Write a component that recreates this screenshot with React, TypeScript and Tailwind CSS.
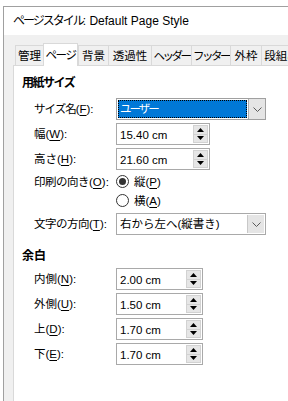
import React from "react";

const font = "font-['Liberation_Sans','Noto_Sans_CJK_JP',sans-serif]";

function Key({ label, k, tight }: { label: string; k: string; tight?: string }) {
  return (
    <span className="whitespace-nowrap">
      <span className={tight}>{label}</span>(<span className="underline underline-offset-2">{k}</span>):
    </span>
  );
}

function Tab({ w, children, tight }: { w: string; children: React.ReactNode; tight?: string }) {
  return (
    <div className={`${w} h-[20px] shrink-0 border-l border-t border-[#d9d9d9] bg-[#f0f0f0] flex items-center justify-center whitespace-nowrap`}>
      <span className={tight}>{children}</span>
    </div>
  );
}

function Arrow({ up }: { up?: boolean }) {
  return (
    <svg width="7" height="4" viewBox="0 0 7 4">
      <polygon points={up ? "0,4 3.5,0 7,4" : "0,0 7,0 3.5,4"} fill="#000" />
    </svg>
  );
}

function Spin({ value, w }: { value: string; w: string }) {
  return (
    <div className={`${w} h-[22px] flex border border-[#a9a9a9] bg-white`}>
      <div className="flex-1 flex items-center pl-[3px] pt-px">{value}</div>
      <div className="w-[16px] flex flex-col py-px pr-px">
        <div className="flex-1 flex items-center justify-center bg-[#e6e6e6] border border-[#d2d2d2]">
          <Arrow up />
        </div>
        <div className="flex-1 flex items-center justify-center bg-[#e6e6e6] border border-t-0 border-[#d2d2d2]">
          <Arrow />
        </div>
      </div>
    </div>
  );
}

function Chevron() {
  return (
    <svg width="9" height="5" viewBox="0 0 9 5">
      <polyline points="0.5,0.5 4.5,4.5 8.5,0.5" fill="none" stroke="#5a5a5a" strokeWidth="1" />
    </svg>
  );
}

function Row({ label, children, mt }: { label: React.ReactNode; children: React.ReactNode; mt: string }) {
  return (
    <div className={`flex items-center ${mt}`}>
      <div className="w-[82px] shrink-0">{label}</div>
      {children}
    </div>
  );
}

function Radio({ checked, label }: { checked?: boolean; label: React.ReactNode }) {
  return (
    <div className="flex items-center gap-[5px] h-[19px]">
      <div className="w-[13px] h-[13px] rounded-full border border-[#333] bg-white flex items-center justify-center">
        {checked && <div className="w-[7px] h-[7px] rounded-full bg-[#333]" />}
      </div>
      {label}
    </div>
  );
}

export default function App() {
  return (
    <div className={`w-[288px] h-[401px] overflow-hidden bg-white text-[11.5px] leading-[16px] text-black flex flex-col ${font}`}>
      {/* window behind, cut off at the top */}
      <div className="h-[5px] overflow-hidden shrink-0">
        <div className="-mt-[14px] pl-[83px] flex gap-[36px] text-[13px] leading-[16px] text-[#444]">
          <span>付</span>
          <span>ス</span>
          <span>見</span>
          <span>取</span>
          <span>温</span>
        </div>
      </div>

      <div className="mt-px ml-[3px] flex-1 flex flex-col border-l border-t border-[#a0a0a0]">
        <div className="h-[28px] shrink-0 flex items-center pl-[9px] bg-white whitespace-nowrap text-[12px]">
          <span className="tracking-[-2px]">ページスタイル</span>: Default Page Style
        </div>

        <div className="flex-1 flex flex-col bg-[#f0f0f0] pl-[9px] pt-[8px]">
          <div className="flex items-end h-[22px] ml-[2px]">
            <Tab w="w-[28px]">管理</Tab>
            <div className="relative z-10 -mb-px h-[23px] w-[35px] shrink-0 border border-b-0 border-[#d9d9d9] bg-white flex items-center justify-center pb-px whitespace-nowrap">
              <span className="tracking-[-1.5px]">ページ</span>
            </div>
            <Tab w="w-[30px]">背景</Tab>
            <Tab w="w-[43px]">透過性</Tab>
            <Tab w="w-[40px]" tight="tracking-[-2.5px]">ヘッダー</Tab>
            <Tab w="w-[39px]" tight="tracking-[-2.5px]">フッター</Tab>
            <Tab w="w-[31px]">外枠</Tab>
            <Tab w="w-[40px]">段組み</Tab>
          </div>

          <div className="flex-1 border-l border-t border-[#d9d9d9] bg-white pl-[8px] pt-[9px]">
            <div className="font-bold text-[12px] tracking-[-1.5px]">用紙サイズ</div>
            <div className="pl-[12px]">
              <Row mt="mt-[7px]" label={<Key label="サイズ名" k="F" tight="tracking-[-1px]" />}>
                <div className="w-[150px] h-[22px] flex border border-[#a0a0a0] bg-white">
                  <div className="flex-1 m-px bg-[#0078d7] border border-dotted border-black flex items-center pl-px text-white">
                    <span className="tracking-[-2px]">ユーザー</span>
                  </div>
                  <div className="w-[17px] bg-[#e5e5e5] border-l border-[#adadad] flex items-center justify-center">
                    <Chevron />
                  </div>
                </div>
              </Row>
              <Row mt="mt-[3px]" label={<Key label="幅" k="W" />}>
                <Spin value="15.40 cm" w="w-[94px]" />
              </Row>
              <Row mt="mt-[3px]" label={<Key label="高さ" k="H" />}>
                <Spin value="21.60 cm" w="w-[94px]" />
              </Row>
              <div className="flex mt-[2px]">
                <div className="w-[82px] shrink-0 h-[19px] flex items-center">
                  <Key label="印刷の向き" k="O" tight="tracking-[-0.5px]" />
                </div>
                <div className="flex flex-col">
                  <Radio checked label={<span>縦(<span className="underline underline-offset-2">P</span>)</span>} />
                  <Radio label={<span>横(<span className="underline underline-offset-2">A</span>)</span>} />
                </div>
              </div>
              <Row mt="mt-[3px]" label={<Key label="文字の方向" k="T" tight="tracking-[-0.5px]" />}>
                <div className="w-[150px] h-[22px] flex border border-[#a9a9a9] bg-white">
                  <div className="flex-1 flex items-center pl-[3px] whitespace-nowrap">右から左へ(縦書き)</div>
                  <div className="w-[17px] m-px bg-[#e5e5e5] border-l border-[#c8c8c8] flex items-center justify-center">
                    <Chevron />
                  </div>
                </div>
              </Row>
            </div>

            <div className="font-bold mt-[13px] text-[12px]">余白</div>
            <div className="pl-[12px]">
              <Row mt="mt-[4px]" label={<Key label="内側" k="N" />}>
                <Spin value="2.00 cm" w="w-[87px]" />
              </Row>
              <Row mt="mt-[3px]" label={<Key label="外側" k="U" />}>
                <Spin value="1.50 cm" w="w-[87px]" />
              </Row>
              <Row mt="mt-[3px]" label={<Key label="上" k="D" />}>
                <Spin value="1.70 cm" w="w-[87px]" />
              </Row>
              <Row mt="mt-[3px]" label={<Key label="下" k="E" />}>
                <Spin value="1.70 cm" w="w-[87px]" />
              </Row>
            </div>
          </div>
        </div>
      </div>
    </div>
  );
}
